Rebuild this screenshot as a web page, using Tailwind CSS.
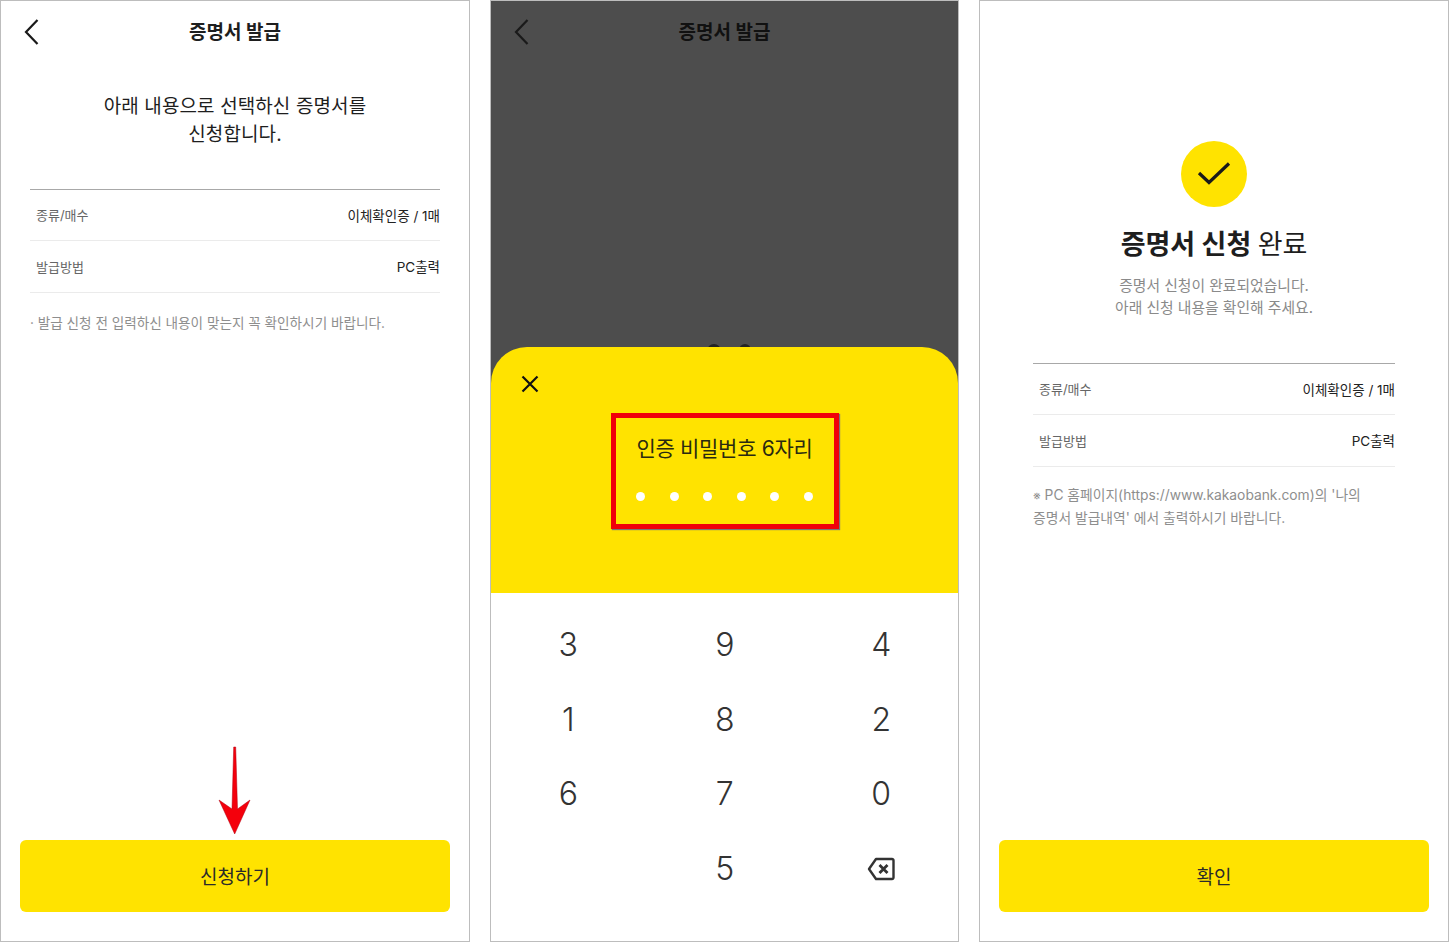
<!DOCTYPE html>
<html lang="ko">
  <head>
    <meta charset="UTF-8" />
    <title>증명서 발급</title>
    <script src="https://cdn.jsdelivr.net/npm/@tailwindcss/browser@4"></script>
  </head>
  <body class="bg-white text-[#1e1e1e] font-['Inter','Noto_Sans_CJK_KR',sans-serif]">
    <div class="flex w-[1449px] h-[942px] overflow-hidden">
      <!-- step 1 -->
      <section class="relative flex flex-col w-[470px] h-[942px] border border-[#bdbdbd] shrink-0">
        <header class="relative flex items-center justify-center h-[61px] pt-[4px] shrink-0">
          <svg class="absolute left-[22px] top-[17px]" width="18" height="28" viewBox="0 0 18 28" fill="none" stroke="#1a1a1a" stroke-width="2.2"><path d="M14.5 2 L3 14 L14.5 26" /></svg>
          <h1 class="text-[19px] font-bold">증명서 발급</h1>
        </header>
        <p class="mt-[31px] text-center text-[19px] leading-[28px] tracking-[0.1px]">아래 내용으로 선택하신 증명서를<br />신청합니다.</p>
        <dl class="mx-[29px] mt-[40px] border-t border-[#a8a8a8]">
          <div class="flex items-center justify-between h-[51px] pt-[2px] pl-[6px] border-b border-[#ebebeb]">
            <dt class="text-[13px] text-[#666]">종류/매수</dt>
            <dd class="text-[13.5px] text-[#222]">이체확인증 / 1매</dd>
          </div>
          <div class="flex items-center justify-between h-[52px] pt-[2px] pl-[6px] border-b border-[#ebebeb]">
            <dt class="text-[13px] text-[#666]">발급방법</dt>
            <dd class="text-[13.5px] text-[#222]">PC출력</dd>
          </div>
        </dl>
        <p class="mx-[29px] mt-[20px] text-[13.6px] leading-[20px] text-[#8e8e8e]">· 발급 신청 전 입력하신 내용이 맞는지 꼭 확인하시기 바랍니다.</p>
        <button class="mt-auto mx-[19px] mb-[29px] h-[72px] pt-[4px] rounded-[6px] bg-[#ffe300] text-[19px] text-[#2a2a2a]">신청하기</button>
        <!-- red arrow annotation -->
        <svg class="absolute left-[217px] top-[745px]" width="34" height="90" viewBox="0 0 34 90">
          <path d="M15.700 1 L17.700 1 L19.500 63 L32 54 L16.700 88 L1 54 L14 63 Z" fill="#f4000c" stroke="#b00010" stroke-width="0.5" />
        </svg>
      </section>

      <!-- step 2 -->
      <section class="relative flex flex-col w-[469px] h-[942px] ml-[20px] border border-[#bdbdbd] shrink-0 overflow-hidden">
        <div class="relative flex flex-col h-[592px] bg-[#4d4d4d] shrink-0">
          <svg class="absolute left-[22px] top-[17px]" width="18" height="28" viewBox="0 0 18 28" fill="none" stroke="#1a1a1a" stroke-width="2.2"><path d="M14.5 2 L3 14 L14.5 26" /></svg>
          <h1 class="pt-[18px] text-center text-[19px] font-bold text-[#111]">증명서 발급</h1>
          <!-- dots peeking above the sheet -->
          <span class="absolute left-[216px] top-[343px] size-[14px] rounded-full bg-[#222]"></span>
          <span class="absolute left-[248px] top-[343px] size-[12px] rounded-full bg-[#222]"></span>
          <div class="relative h-[246px] mt-auto bg-[#ffe300] rounded-t-[36px] pt-[87px]">
            <svg class="absolute left-[30px] top-[28px]" width="18" height="18" viewBox="0 0 18 18" fill="none" stroke="#111" stroke-width="2.2"><path d="M1.5 1.5 L16.5 16.5 M16.5 1.5 L1.5 16.5" /></svg>
            <p class="text-center text-[21px] leading-[30px] text-[#2a2a10] tracking-[-0.3px]">인증 비밀번호 6자리</p>
            <div class="flex justify-center gap-[24.6px] mt-[28px]">
              <span class="size-[9px] rounded-full bg-white"></span>
              <span class="size-[9px] rounded-full bg-white"></span>
              <span class="size-[9px] rounded-full bg-white"></span>
              <span class="size-[9px] rounded-full bg-white"></span>
              <span class="size-[9px] rounded-full bg-white"></span>
              <span class="size-[9px] rounded-full bg-white"></span>
            </div>
            <!-- red highlight box -->
            <div class="absolute left-[120px] top-[66px] w-[228px] h-[116px] border-[5px] border-[#f0000a] shadow-[1px_1px_1px_#777]"></div>
          </div>
        </div>
        <div class="grid grid-cols-[repeat(3,156.5px)] auto-rows-[74.5px] -ml-px pt-[15px] text-[32px] font-light leading-[74.5px] text-center text-[#333]">
          <span>3</span><span>9</span><span>4</span>
          <span>1</span><span>8</span><span>2</span>
          <span>6</span><span>7</span><span>0</span>
          <span></span><span>5</span>
          <span class="flex items-center justify-center">
            <svg width="28" height="24" viewBox="0 0 28 24" fill="none" stroke="#333" stroke-width="2.4" stroke-linejoin="round"><path d="M9 2 H25 a1.5 1.5 0 0 1 1.5 1.5 V20.500 a1.500 1.500 0 0 1 -1.500 1.500 H9 L2 12 Z" /><path d="M12.500 8 L20.500 16 M20.500 8 L12.500 16" stroke-width="2.800" /></svg>
          </span>
        </div>
      </section>

      <!-- step 3 -->
      <section class="relative flex flex-col w-[470px] h-[942px] ml-[20px] border border-[#bdbdbd] shrink-0">
        <div class="mt-[140px] mx-auto flex items-center justify-center size-[66px] rounded-full bg-[#ffe300] shrink-0">
          <svg width="34" height="26" viewBox="0 0 34 26" fill="none" stroke="#1a1a1a" stroke-width="3.2"><path d="M2 12 L12 21.500 L32 2.500" /></svg>
        </div>
        <h2 class="mt-[20px] text-center text-[27px] leading-[36px] font-bold">증명서 신청 <span class="font-normal">완료</span></h2>
        <p class="mt-[12px] text-center text-[14.8px] leading-[22px] text-[#8a8a8a]">증명서 신청이 완료되었습니다.<br />아래 신청 내용을 확인해 주세요.</p>
        <dl class="mx-[53px] mt-[44px] border-t border-[#a8a8a8]">
          <div class="flex items-center justify-between h-[51px] pt-[2px] pl-[6px] border-b border-[#ebebeb]">
            <dt class="text-[13px] text-[#666]">종류/매수</dt>
            <dd class="text-[13.5px] text-[#222]">이체확인증 / 1매</dd>
          </div>
          <div class="flex items-center justify-between h-[52px] pt-[2px] pl-[6px] border-b border-[#ebebeb]">
            <dt class="text-[13px] text-[#666]">발급방법</dt>
            <dd class="text-[13.5px] text-[#222]">PC출력</dd>
          </div>
        </dl>
        <p class="mx-[53px] mt-[17px] text-[13.8px] leading-[23px] text-[#8e8e8e]"><span class="text-[12px] leading-none">※</span> PC 홈페이지(https://www.kakaobank.com)의 '나의<br />증명서 발급내역' 에서 출력하시기 바랍니다.</p>
        <button class="mt-auto mx-[19px] mb-[29px] h-[72px] pt-[4px] rounded-[6px] bg-[#ffe300] text-[19px] text-[#2a2a2a]">확인</button>
      </section>
    </div>
  </body>
</html>
